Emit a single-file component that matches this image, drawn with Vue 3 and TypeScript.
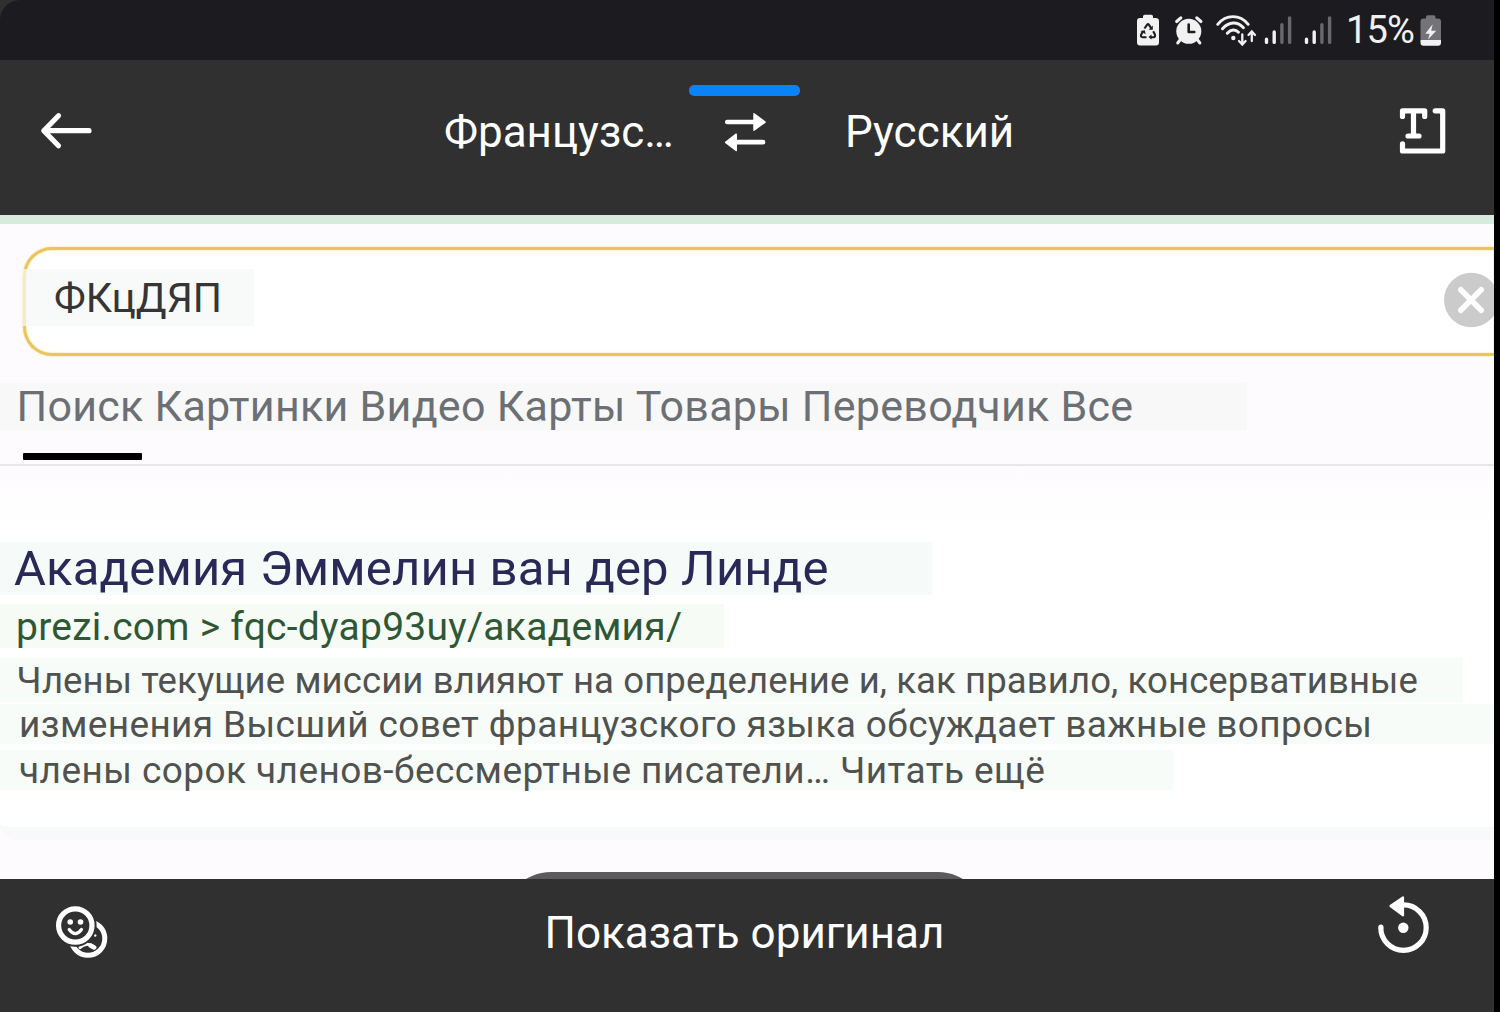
<script setup lang="ts">
interface Snippet {
  id: string
  text: string
}

const query = 'ФКцДЯП'
const tabs: string[] = ['Поиск', 'Картинки', 'Видео', 'Карты', 'Товары', 'Переводчик', 'Все']
const snippets: Snippet[] = [
  { id: 'first', text: 'Члены текущие миссии влияют на определение и, как правило, консервативные' },
  { id: 'second', text: 'изменения Высший совет французского языка обсуждает важные вопросы' },
  { id: 'third', text: 'члены сорок членов-бессмертные писатели… Читать ещё' },
]
const signals: number[] = [1, 2]
</script>

<template>
  <div class="screen">
    <header class="status">
      <svg class="saver" width="24" height="36" viewBox="0 0 24 36">
        <path d="M7 4.5q0-1.700 1.700-1.700h6.600q1.700 0 1.700 1.700V6h2.500Q23 6 23 9v21.500q0 3-3 3H4q-3 0-3-3V9q0-3 3-3h3z" fill="#f1f1f1" />
        <g fill="none" stroke="#1c1b20" stroke-width="2.100">
          <path d="M8.500 16.500 11 12.800q1-1.300 2 0l2 3" />
          <path d="M17.200 19.300l1.700 3.200q.7 2.400-1.500 2.800H14" />
          <path d="M10.500 25.300H6.700q-2.300-.3-1.600-2.600l1.800-3.300" />
        </g>
        <path d="M16.800 13.500v4.200h-4.200zM15.500 22.500v5l-3-2.500zM4.500 19l4.300-.8.8 4z" fill="#1c1b20" />
      </svg>
      <svg class="alarm" width="30" height="36" viewBox="0 0 30 36">
        <circle cx="14.800" cy="19.300" r="12.500" fill="#f1f1f1" />
        <path d="M2.700 9.500 6.800 5.900M26.900 9.500 22.800 5.900" stroke="#f1f1f1" stroke-width="3.200" stroke-linecap="round" />
        <path d="M6 28l-2.300 3M23.600 28l2.300 3" stroke="#f1f1f1" stroke-width="3" stroke-linecap="round" />
        <path d="M14.700 12.500v7.500h5.600" fill="none" stroke="#1c1b20" stroke-width="2.600" stroke-linecap="round" stroke-linejoin="round" />
      </svg>
      <svg class="wifi" width="42" height="36" viewBox="0 0 42 36" fill="none" stroke="#f1f1f1" stroke-linecap="round">
        <path d="M2.700 12.300C11 2 25 2 33.200 12.300" stroke-width="2.900" />
        <path d="M7.500 16.800C14 9.300 22.500 9.300 28.500 15.800" stroke-width="2.900" />
        <path d="M12.300 21.300C16 17 20.500 17 23.500 20.300" stroke-width="2.900" />
        <circle cx="18.300" cy="26" r="2.200" fill="#f1f1f1" stroke="none" />
        <path d="M27.300 22.500v9.500M24 29l3.300 3.500 3.300-3.500M36.800 29v-9M33.500 23l3.300-3.500L40 23" stroke-width="2.300" />
      </svg>
      <svg v-for="n in signals" :key="n" :class="['signal', `signal-${n}`]" width="28" height="36" viewBox="0 0 28 36">
        <g stroke-width="3.400" stroke-linecap="round">
          <path d="M2.500 27.300v3.100M10.200 20v10.400" stroke="#f1f1f1" />
          <path d="M17.900 12.700v17.700M25.600 6v24.400" stroke="#69686c" />
        </g>
      </svg>
      <span class="percent">15%</span>
      <svg width="22" height="36" viewBox="0 0 22 36">
        <path d="M6 5q0-1.700 1.700-1.700h6Q15.500 3.300 15.500 5v1.500h2.500q3 0 3 3V28H.5V9.500q0-3 3-3H6z" fill="#747377" />
        <path d="M.5 28H21v2.700q0 3-3 3H3.500q-3 0-3-3z" fill="#f1f1f1" />
        <path d="M12.700 12.300 5.300 21.700h4.400L8 27.500l8.200-8.800h-5z" fill="#f1f1f1" />
      </svg>
    </header>

    <nav class="languages">
      <svg class="back" width="54" height="38" viewBox="0 0 54 38" fill="none" stroke="#fff" stroke-width="5.200" stroke-linecap="round" stroke-linejoin="round">
        <path d="M49 18.700H4M18.500 3.700 3.800 18.700l14.700 15" />
      </svg>
      <span class="source">Французс…</span>
      <div class="swap">
        <i class="indicator"></i>
        <svg width="42" height="40" viewBox="0 0 42 40" fill="#fff">
          <path d="M3.300 10H31M39 30.200H12" stroke="#fff" stroke-width="4.700" stroke-linecap="round" />
          <path d="M30 1.800l11.100 8.300L30 18.200z" stroke="#fff" stroke-width="1.500" stroke-linejoin="round" />
          <path d="M12.200 22.200 1.600 30.300l10.600 8.200z" stroke="#fff" stroke-width="1.500" stroke-linejoin="round" />
        </svg>
      </div>
      <span class="target">Русский</span>
      <svg class="scan" width="48" height="48" viewBox="0 0 48 48" fill="none" stroke="#fff" stroke-width="5.200" stroke-linecap="round" stroke-linejoin="round">
        <path d="M3.500 9.500V3.800h22.200v5.700M14.500 4v25M9 29h11M36.200 3.800h7.500V44H3.500v-7.200" />
      </svg>
    </nav>

    <main class="page">
      <div class="search">
        <span class="query">{{ query }}</span>
        <svg class="clear" width="50" height="56" viewBox="0 0 50 56">
          <circle cx="27.300" cy="28" r="27.300" fill="#cbcbcb" />
          <path d="M16.800 17.800l20.400 20.400M37.200 17.800 16.800 38.200" stroke="#fff" stroke-width="5.600" stroke-linecap="round" />
        </svg>
      </div>
      <div class="tabs">{{ tabs.join(' ') }}</div>
      <div class="tab-line"><i></i></div>
      <article class="result">
        <h2 class="title">Академия Эммелин ван дер Линде</h2>
        <div class="url">prezi.com &gt; fqc-dyap93uy/академия/</div>
        <div v-for="s in snippets" :key="s.id" :class="['snippet', s.id]">{{ s.text }}</div>
      </article>
      <div class="pill"></div>
    </main>

    <footer class="actions">
      <svg class="faces" width="54" height="54" viewBox="0 0 54 54" fill="none" stroke="#fff" stroke-linecap="round">
        <defs>
          <mask id="behind">
            <rect width="54" height="54" fill="#fff" stroke="none" />
            <circle cx="21.300" cy="21.500" r="21.300" fill="#000" stroke="none" />
          </mask>
        </defs>
        <g mask="url(#behind)">
          <circle cx="34" cy="34.500" r="16.800" stroke-width="5" />
          <path d="M26 43.500Q33.500 37 41 43.500" stroke-width="3" />
          <path d="M36.500 41.500l3.500 2" stroke-width="4.500" />
          <circle cx="41.200" cy="31.500" r="1.200" fill="#fff" stroke="none" />
        </g>
        <circle cx="21.300" cy="21.500" r="16.700" stroke-width="5.200" />
        <g fill="#fff" stroke="none">
          <circle cx="16.200" cy="18" r="2.800" />
          <circle cx="26.500" cy="18" r="2.800" />
        </g>
        <path d="M15.200 25.500q6.100 8.200 12.300 0" stroke-width="3.200" />
      </svg>
      <span class="original">Показать оригинал</span>
      <svg class="reset" width="54" height="60" viewBox="0 0 54 60" fill="none" stroke="#fff">
        <path d="M3.800 32.500A22.700 22.700 0 1 0 26.500 9.900" stroke-width="5.200" />
        <circle cx="3.900" cy="32" r="2.600" fill="#fff" stroke="none" />
        <path d="M26 2.300v18L13.500 11z" fill="#fff" stroke-width="2.200" stroke-linejoin="round" />
        <circle cx="26.300" cy="32.800" r="5.200" fill="#fff" stroke="none" />
      </svg>
    </footer>
  </div>
</template>

<style>
body {
  margin: 0;
  background: #000;
}
</style>

<style scoped>
.screen {
  display: flex;
  flex-direction: column;
  width: 1493.5px;
  height: 1012px;
  overflow: hidden;
  font-family: Roboto, "Noto Sans", sans-serif;
  white-space: nowrap;
  background: #303030;
}
svg {
  display: block;
  flex: none;
}
.status {
  display: flex;
  box-sizing: border-box;
  height: 60px;
  padding: 12px 0 0 1136px;
  border-top-left-radius: 20px;
  background: #1c1b20;
  color: #f1f1f1;
}
.alarm {
  margin-left: 14px;
}
.wifi {
  margin-left: 11px;
}
.signal-1 {
  margin-left: 7px;
}
.signal-2 {
  margin-left: 12px;
}
.percent {
  width: 74px;
  margin-left: 14px;
  font-size: 38px;
  line-height: 36px;
  letter-spacing: -0.8px;
}
.languages {
  display: flex;
  box-sizing: border-box;
  height: 155px;
  color: #fff;
  font-size: 44px;
  line-height: 48px;
}
.back {
  margin: 52px 0 0 40px;
}
.source {
  width: 245px;
  margin: 48px 0 0 350px;
}
.swap {
  display: flex;
  flex-direction: column;
  align-items: center;
  width: 111px;
  padding-top: 25px;
}
.indicator {
  width: 111px;
  height: 11px;
  margin-bottom: 16px;
  border-radius: 5px;
  background: #0a82f8;
}
.target {
  width: 199px;
  margin: 48px 0 0 45px;
}
.scan {
  margin: 47px 0 0 355px;
}
.page {
  position: relative;
  display: flex;
  flex-direction: column;
  box-sizing: border-box;
  height: 664px;
  overflow: hidden;
  border-top: 9px solid #d6eadd;
  background: #fefbff;
}
.search {
  display: flex;
  justify-content: space-between;
  align-items: center;
  box-sizing: border-box;
  height: 109px;
  margin: 22.500px 0 0 23px;
  border: 3px solid #e9c55c;
  border-right: 0;
  border-radius: 29px 0 0 29px;
  background: #fff;
  box-shadow: 0 0 2px #f5da78, inset 0 0 2px #f5da78;
}
.query {
  box-sizing: border-box;
  width: 231px;
  height: 57px;
  margin: -7px 0 0 -3px;
  padding-left: 31px;
  background: rgba(244, 248, 245, 0.75);
  color: #353535;
  font-size: 41px;
  line-height: 58px;
}
.clear {
  margin-top: -2px;
}
.tabs {
  width: 1230.500px;
  height: 47px;
  margin-top: 27.500px;
  padding-left: 16.500px;
  background: #f8f8f9;
  color: #6c7074;
  font-size: 43px;
  line-height: 47px;
  letter-spacing: 0.27px;
}
.tab-line {
  height: 12px;
  margin-top: 22px;
  border-bottom: 2px solid #e6e6e9;
}
.tab-line i {
  display: block;
  width: 119px;
  height: 7px;
  margin: 0.500px 0 0 23px;
  border-radius: 1px;
  background: #000;
}
.result {
  box-sizing: border-box;
  height: 374px;
  padding-top: 76px;
  border-bottom: 13px solid #f8f9fb;
  border-bottom-left-radius: 16px;
  background: linear-gradient(#fefbff, #fff 60px);
}
.title {
  width: 918px;
  height: 53px;
  margin: 0;
  padding-left: 14px;
  background: #f6faf9;
  color: #2a2857;
  font-size: 49px;
  font-weight: 400;
  line-height: 53px;
  letter-spacing: 0.149px;
}
.url {
  width: 708px;
  height: 44px;
  margin-top: 9px;
  padding-left: 16px;
  background: #f6fbf6;
  color: #2f5735;
  font-size: 39px;
  line-height: 47px;
  letter-spacing: 0.263px;
}
.snippet {
  box-sizing: border-box;
  background: #f7fcf9;
  color: #505250;
  font-size: 37px;
}
.first {
  width: 1463px;
  height: 44px;
  margin-top: 10px;
  padding-left: 16.500px;
  font-size: 36.5px;
  line-height: 45px;
  letter-spacing: 0.11px;
}
.second {
  width: 100%;
  height: 40px;
  margin-top: 2px;
  padding-left: 19px;
  line-height: 41px;
  letter-spacing: 0.37px;
}
.third {
  width: 1173px;
  height: 40px;
  margin-top: 6px;
  padding-left: 19px;
  line-height: 42px;
  letter-spacing: 0.43px;
}
.pill {
  position: absolute;
  top: 648px;
  left: 503px;
  width: 483px;
  height: 96px;
  border-radius: 48px;
  background: #5b5b5b;
}
.actions {
  display: flex;
  height: 133px;
  color: #fff;
}
.faces {
  margin: 25px 0 0 54px;
}
.original {
  width: 409.500px;
  margin: 29px 0 0 436.500px;
  font-size: 44px;
  line-height: 51px;
}
.reset {
  margin: 16px 0 0 423px;
}
</style>
